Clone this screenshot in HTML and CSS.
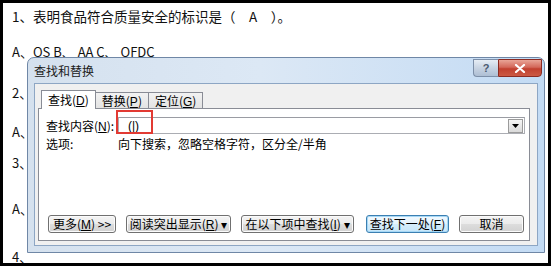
FILE: index.html
```html
<html>
	<head>
		<meta charset="utf-8">
		<link rel="stylesheet" href="styles.css">
	</head>
	<body>
		<div class="page">
			<div class="doc">
				<p class="ln ln1">1、表明食品符合质量安全的标识是（　A　）。</p>
				<p class="ln ln2">A、QS B、 AA C、 QFDC</p>
				<p class="ln ln3">2、</p>
				<p class="ln ln4">A、</p>
				<p class="ln ln5">3、</p>
				<p class="ln ln6">A、</p>
				<p class="ln ln7">4、</p>
			</div>

			<!-- 查找和替换 window -->
			<div class="dlg">
				<div class="capBar">
					<span class="capTxt">查找和替换</span>
					<div class="capBtns">
						<div class="capHelp">?</div>
						<div class="capClose">
							<svg width="12" height="9" viewBox="0 0 12 9"><path d="M2 1 L10 8 M10 1 L2 8" stroke="#fff" stroke-width="2.2" stroke-linecap="round"/></svg>
						</div>
					</div>
				</div>
				<div class="client">
					<div class="tabs">
						<div class="tab tabOn">查找(<u>D</u>)</div>
						<div class="tab">替换(<u>P</u>)</div>
						<div class="tab">定位(<u>G</u>)</div>
					</div>
					<div class="panel">
						<div class="row">
							<span class="lbl">查找内容(<u>N</u>):</span>
							<div class="combo">
								<span class="comboTxt">(|)</span>
								<div class="comboBtn">
									<svg width="7" height="4" viewBox="0 0 7 4"><path d="M0 0 H7 L3.5 4 Z" fill="#000"/></svg>
								</div>
							</div>
						</div>
						<div class="row optRow">
							<span class="lbl">选项:</span>
							<span>向下搜索，忽略空格字符，区分全/半角</span>
						</div>
						<div class="btnRow">
							<div class="btn bMore">更多(<u>M</u>) &gt;&gt;</div>
							<div class="btn bRead">阅读突出显示(<u>R</u>) ▾</div>
							<div class="btn bIn">在以下项中查找(<u>I</u>) ▾</div>
							<div class="btn bNext">查找下一处(<u>F</u>)</div>
							<div class="btn bCancel">取消</div>
						</div>
						<div class="mark"></div>
					</div>
				</div>
			</div>
		</div>
	</body>
</html>
```

FILE: styles.css
```css
body {
	margin: 0;
	background: #fff;
	font-family: "Liberation Sans", "Noto Sans CJK SC", sans-serif;
	color: #000;
}

.page {
	position: relative;
	width: 551px;
	height: 266px;
	border: 3px solid #000;
	box-sizing: border-box;
	overflow: hidden;
	background: #fff;
}

/* document behind the window */
.doc {
	padding: 3px 0 0 9px;
	font-family: "Noto Sans CJK SC", sans-serif;
	font-size: 13px;
	line-height: 20px;
	color: #111;
}
.ln {
	margin: 0;
	white-space: nowrap;
}
.ln1 { font-size: 13.5px; }
.ln2 { margin-top: 16px; }
.ln3 { margin-top: 21px; }
.ln4 { margin-top: 19px; }
.ln5 { margin-top: 11px; }
.ln6 { margin-top: 26px; }
.ln7 { margin-top: 28px; }

/* window */
.dlg {
	position: absolute;
	left: 24px;
	top: 54px;
	width: 518px;
	height: 196px;
	box-sizing: border-box;
	border: 1px solid #6f87a6;
	border-radius: 7px 7px 0 0;
	background: linear-gradient(to right, #d5e1ee, #dce8f5 45%, #c3dbf4);
	padding: 0 6px 6px 6px;
	display: flex;
	flex-direction: column;
	font-size: 12px;
}

.capBar {
	height: 25px;
	display: flex;
	align-items: center;
	margin-right: -4px;
}
.capTxt {
	font-family: "Noto Sans CJK SC", sans-serif;
	font-size: 12px;
	color: #1a1a1a;
	margin-top: -1px;
}
.capBtns {
	margin-left: auto;
	align-self: flex-start;
	display: flex;
	margin-top: 1px;
}
.capHelp {
	width: 24px;
	height: 16px;
	border: 1px solid #7d8fa8;
	border-right: none;
	border-radius: 0 0 0 4px;
	background: linear-gradient(#e6edf5, #c7d3e2 50%, #aebfd4);
	color: #4a5a70;
	font-size: 11px;
	font-weight: bold;
	text-align: center;
	line-height: 16px;
}
.capClose {
	width: 42px;
	height: 16px;
	border: 1px solid #8b2b22;
	border-radius: 0 0 4px 0;
	background: linear-gradient(#e9a597, #d3685a 45%, #c1402f 55%, #cc5a44);
	display: flex;
	align-items: center;
	justify-content: center;
}

.client {
	flex: 1;
	background: #f0f0f0;
	border: 1px solid #8da6c4;
	padding: 6px 7px 4px 3px;
	display: flex;
	flex-direction: column;
}

.tabs {
	display: flex;
	align-items: flex-end;
	padding-left: 3px;
	position: relative;
	z-index: 1;
}
.tab {
	height: 15px;
	line-height: 15px;
	padding: 0 6px;
	border: 1px solid #898c95;
	border-bottom: none;
	background: linear-gradient(#f2f2f2, #e3e3e3);
	margin-left: -1px;
	font-family: "Noto Sans CJK SC", sans-serif;
}
.tabOn {
	height: 18px;
	line-height: 18px;
	background: #fff;
	margin-bottom: -1px;
	margin-left: 0;
	position: relative;
	z-index: 2;
}
.tab u, .lbl u, .btn u {
	font-family: "Liberation Sans", sans-serif;
}

.panel {
	flex: 1;
	position: relative;
	background: #fff;
	border: 1px solid #898c95;
	padding: 8px 4px 7px 7px;
	display: flex;
	flex-direction: column;
}

.row {
	display: flex;
	align-items: center;
	font-family: "Noto Sans CJK SC", sans-serif;
}
.lbl {
	width: 72px;
	flex: none;
}
.combo {
	width: 408px;
	height: 17px;
	box-sizing: border-box;
	border: 1px solid #abadb3;
	border-top-color: #9a9ca3;
	display: flex;
	align-items: center;
	padding-left: 9px;
}
.comboTxt {
	font-family: "Liberation Sans", sans-serif;
	font-size: 12px;
}
.comboBtn {
	margin-left: auto;
	margin-right: 1px;
	width: 13px;
	height: 12px;
	border: 1px solid #9b9b9b;
	background: linear-gradient(#f6f6f6, #dadada);
	display: flex;
	align-items: center;
	justify-content: center;
}
.optRow {
	margin-top: 2px;
	height: 14px;
}

.btnRow {
	margin-top: auto;
	display: flex;
	padding-left: 2px;
	gap: 10px;
}
.btn {
	height: 18px;
	box-sizing: border-box;
	border: 1px solid #707070;
	border-radius: 3px;
	background: linear-gradient(#f4f4f4, #ebebeb 50%, #dddddd 51%, #d2d2d2);
	box-shadow: inset 0 0 0 1px #fbfbfb;
	font-family: "Noto Sans CJK SC", sans-serif;
	line-height: 16px;
	text-align: center;
	white-space: nowrap;
}
.bMore { width: 68px; }
.bRead { width: 105px; }
.bIn { width: 113px; }
.bNext {
	width: 83px;
	margin-left: 2px;
	border-color: #3c7fb1;
	background: linear-gradient(#f2f9fe, #e4f3fc 50%, #d4edfb 51%, #c7e6f9);
	box-shadow: inset 0 0 0 1px #a6d8f6;
}
.bCancel { width: 65px; }

/* red annotation box */
.mark {
	position: absolute;
	left: 77px;
	top: 1px;
	width: 33px;
	height: 20px;
	border: 2px solid #e23a33;
}
```
